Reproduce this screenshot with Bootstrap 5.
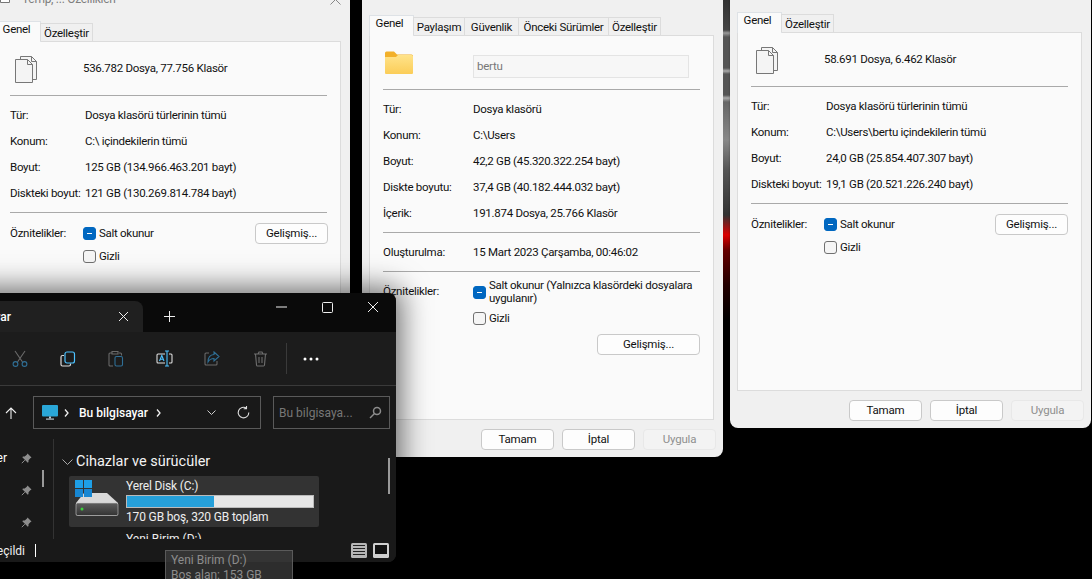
<!doctype html>
<html lang="tr">
<head>
<meta charset="utf-8">
<title>Özellikler</title>
<link href="https://cdn.jsdelivr.net/npm/bootstrap@5.3.0/dist/css/bootstrap.min.css" rel="stylesheet">
<script src="https://cdn.jsdelivr.net/npm/bootstrap@5.3.0/dist/js/bootstrap.bundle.min.js"></script>
<style>
html,body{height:100%}
body{background:#000;font-family:Roboto,"Noto Sans",sans-serif;font-size:11.5px;letter-spacing:-.28px;color:#111;overflow:hidden}
.desk{position:relative;width:1092px;height:579px;overflow:hidden;background:#000}
.strip{position:absolute;left:723px;top:0;width:7px;height:320px;background:linear-gradient(180deg,#333 0,#444 30px,#999 33px,#555 37px,#555 68px,#aaa 71px,#555 74px,#555 95px,#aaa 98px,#666 102px,#888 140px,#555 170px,#333 215px,#d00 235px,#600 250px,#200 285px,#000 320px)}
.dlg{position:absolute;width:361px;background:#f0f0f0;border-radius:0 0 8px 8px;display:flex;flex-direction:column;padding:0 9px 0 7px}
.dlg-a{left:-11px;top:-17px;height:320px}
.dlg-b{left:362px;top:-23px;height:480px}
.dlg-c{left:730px;top:-26px;height:454px;box-shadow:0 1px 2px #0006}
.dlg-title{height:38px;padding:7px 0 0 4px;color:#7e7e7e;font-size:12px;line-height:18px;display:flex;flex:none}
.dlg-title .ttl{margin-left:12px}
.dlg-title .cls{margin:4px 0 0 auto}
.dlg-title .fic{margin-top:-1px}
.dlg-tabs{border:0;flex:none;height:20px;flex-wrap:nowrap;align-items:flex-end;position:relative;z-index:1}
.dlg-tabs .nav-link{padding:0;height:18px;border:1px solid #dcdcdc;border-bottom:0;border-radius:0;margin:0 -1px 0 0;background:#f0f0f0;color:#111;font-size:11.5px;line-height:19px;text-align:center}
.dlg-tabs .nav-link.active{background:#fafafa;color:#111;line-height:15px;margin-bottom:-1px;height:21px;width:45px;padding-right:4px}
.t-ozel{width:53px}.t-pay{width:52px}.t-guv{width:55px}.t-onc{width:91px}
.dlg-panel{flex:1 1 auto;min-height:0;background:#fafafa;border:1px solid #dcdcdc;padding:0 13px}
.dlg-foot{flex:none;height:37px;display:flex;justify-content:flex-end;align-items:flex-start;gap:8px;padding-top:9px;margin-right:-2px}
.w-btn{width:73px;height:21px;padding:0;font-size:11.5px;line-height:19px;background:#fdfdfd;border:1px solid #c9c9c9;border-radius:4px;color:#111;letter-spacing:-.2px}
.w-btn:disabled{background:#f3f3f3;border-color:#e8e8e8;color:#8f8f8f;opacity:1}
.head-row{height:53px;display:flex;align-items:center}
.head-ico{width:73px;flex:none}
.head-ico svg{display:block;margin-left:4px}
.dlg-b .head-ico{width:90px}
.dlg-b .head-ico svg{margin-left:1px}
.head-txt{margin-top:1px}
.name-box{width:216px;height:23px;border:1px solid #e4e4e4;background:#f7f7f7;color:#777;padding:2px 3px;margin-top:8px;line-height:17px}
.rule{border-top:1px solid #a9a9a9;height:0;margin:0}
.sect{padding:7px 0 5px}
.info{height:26px;display:flex;align-items:center;white-space:nowrap}
.info span:first-child{width:75px;flex:none}
.dlg-b .info span:first-child{width:90px}
.attrs{display:flex;padding-top:14px}
.attr-lab{width:73px;flex:none;line-height:13px}
.dlg-b .attrs{padding-top:7px}
.dlg-b .attr-lab{width:90px;padding-top:6px}
.attr-opts{flex:1 1 auto;min-width:0}
.chk{display:flex;align-items:center;gap:3px;line-height:13px}
.chk+.chk{margin-top:10px}
.dlg-b .chk+.chk{margin-top:7px}
.chk b{width:13px;height:13px;flex:none;border-radius:3px;border:1px solid #707070;background:#f5f5f5;display:block;position:relative}
.chk b.on{background:#0067c0;border-color:#0067c0}
.chk b.on::after{content:"";position:absolute;left:3px;right:3px;top:5px;height:1px;background:#fff}
.attr-side{flex:none;margin-top:-4px}
.dlg-a .attr-side{margin-right:-1px}
.adv-b{display:flex;justify-content:flex-end;margin-top:9px}
.w-btn-adv{width:103px}
/* explorer */
.xp{position:absolute;left:-200px;top:293px;width:596px;height:269px;background:#191919;border-radius:8px;box-shadow:0 0 28px 6px rgba(0,0,0,.55);color:#fff;overflow:hidden;display:flex;flex-direction:column;letter-spacing:0}
.xp-title{height:39px;flex:none;background:#0a0a0a;display:flex;align-items:flex-start}
.xp-tab{width:343px;height:31px;margin-top:8px;background:#202020;border-radius:8px 8px 0 0;display:flex;align-items:center;justify-content:flex-end;font-size:12px;font-weight:500}
.xp-tab em{font-style:normal;margin-right:107px}
.xp-tab svg{margin-right:14px}
.xp-plus{width:52px;height:31px;margin-top:8px;display:flex;align-items:center;justify-content:center}
.xp-ctl{margin-left:auto;display:flex}
.xp-ctl span{width:46px;height:28px;display:flex;align-items:center;justify-content:center}
.xp-tools{height:54px;flex:none;background:#1c1c1c;border-bottom:1px solid #3a3a3a;display:flex;align-items:center;padding-left:196px}
.xp-tools span{width:48px;display:flex;justify-content:center}
.xp-tools u{width:1px;height:31px;background:#3a3a3a;display:block;margin:0 0 0 2px}
.xp-tools .more{width:48px;color:#fff}
.xp-addr{height:53px;flex:none;display:flex;align-items:flex-start;padding:10px 0 0 200px}
.xp-up{width:33px;height:33px;display:flex;align-items:center;justify-content:flex-start;padding-left:5px}
.xp-box{height:33px;border:1px solid #5a5a5a;display:flex;align-items:center}
.xp-crumb{width:228px;font-size:12px;font-weight:500;padding-left:8px}
.xp-crumb .cv1{margin:0 10px 0 6px}
.xp-crumb .cv2{margin-left:8px}
.xp-crumb .gr{margin-left:auto;display:flex;gap:21px;padding-right:10px;align-items:center}
.xp-srch{width:117px;margin-left:12px;color:#777;padding:0 7px 0 5px;justify-content:space-between;font-size:12px}
.xp-body{flex:1 1 auto;min-height:0;display:flex;overflow:hidden}
.xp-side{width:254px;flex:none;border-right:1px solid #333;position:relative;padding-top:3px}
.xp-nav{height:32px;display:flex;align-items:center;justify-content:flex-end;font-size:12px;padding-right:21px;gap:14px}
.xp-sbar{position:absolute;left:242px;top:31px;width:2px;height:17px;background:#999}
.xp-main{flex:1 1 auto;position:relative;padding:12px 0 0 8px}
.xp-h{font-size:14.5px;line-height:22px;display:flex;align-items:center;gap:3px;height:22px;color:#f3f3f3}
.xp-drive{width:250px;height:51px;margin:3px 0 0 7px;background:#333;border-radius:2px;display:flex;padding:3px 5px 0 6px}
.xp-dico{width:51px;flex:none;margin-top:1px}
.xp-dtxt{flex:1 1 auto;font-size:12px;line-height:14px;color:#eee;letter-spacing:-.15px}
.xp-meter{height:13px;margin:2px 0 2px;background:#e6e6e6;border:1px solid #bbb}
.xp-meter div{height:100%;background:#26a0da}
.xp-next{margin:5px 0 0 64px;font-size:12px;line-height:14px;color:#eee}
.xp-vbar{position:absolute;right:6px;top:19px;width:2px;height:36px;background:#9a9a9a}
.xp-status{height:23px;flex:none;display:flex;align-items:center;font-size:12px;background:#191919;padding-right:7px;color:#eee}
.xp-count{width:225px;flex:none;text-align:right}
.xp-caret{width:1px;height:13px;background:#fff;margin-left:10px}
.xp-views{margin-left:auto;display:flex;gap:6px}
.xp-tip{position:absolute;left:165px;top:550px;width:128px;height:40px;background:rgba(62,62,62,.72);border:1px solid #5a5a5a;color:#8c8c8c;font-size:12px;line-height:15px;padding:2px 5px;letter-spacing:0}
</style>
</head>
<body>
<div class="desk">
  <div class="strip"></div>

  <section class="dlg dlg-a">
    <div class="dlg-title"><svg class="fic" width="10" height="14" viewBox="0 0 10 14" fill="#fff" stroke="#777"><path d="M.5.500H6.500L9.500 3.500V13.500H.5Z"/></svg><span class="ttl">Temp, ... Özellikleri</span><svg class="cls" width="11" height="11" viewBox="0 0 11 11" stroke="#888"><path d="M.5.500 10.500 10.500M10.500.500 .5 10.500"/></svg></div>
    <ul class="nav nav-tabs dlg-tabs"><li class="nav-item"><a class="nav-link active">Genel</a></li><li class="nav-item"><a class="nav-link t-ozel">Özelleştir</a></li></ul>
    <div class="dlg-panel">
      <div class="head-row">
        <div class="head-ico"><svg width="24" height="28" viewBox="0 0 24 28" fill="#f4f4f4" stroke="#777"><path d="M6.500 4.500V1.500H17.500L22.500 6.500V24.500H18.500"/><path d="M1.500 4.500H13.500L18.500 9.500V27.500H1.500Z"/><path d="M13.500 4.500V9.500H18.500M17.500 1.500V6.500H22.500" fill="none"/></svg></div>
        <div class="head-txt">536.782 Dosya, 77.756 Klasör</div>
      </div>
      <div class="rule"></div>
      <div class="sect">
        <div class="info"><span>Tür:</span><span>Dosya klasörü türlerinin tümü</span></div>
        <div class="info"><span>Konum:</span><span>C:\ içindekilerin tümü</span></div>
        <div class="info"><span>Boyut:</span><span>125 GB (134.966.463.201 bayt)</span></div>
        <div class="info"><span>Diskteki boyut:</span><span>121 GB (130.269.814.784 bayt)</span></div>
      </div>
      <div class="rule"></div>
      <div class="attrs">
        <div class="attr-lab">Öznitelikler:</div>
        <div class="attr-opts">
          <div class="chk"><b class="on"></b><span>Salt okunur</span></div>
          <div class="chk"><b></b><span>Gizli</span></div>
        </div>
        <div class="attr-side"><button class="btn w-btn" type="button">Gelişmiş...</button></div>
      </div>
    </div>
  </section>

  <section class="dlg dlg-b">
    <div class="dlg-title"></div>
    <ul class="nav nav-tabs dlg-tabs"><li class="nav-item"><a class="nav-link active">Genel</a></li><li class="nav-item"><a class="nav-link t-pay">Paylaşım</a></li><li class="nav-item"><a class="nav-link t-guv">Güvenlik</a></li><li class="nav-item"><a class="nav-link t-onc">Önceki Sürümler</a></li><li class="nav-item"><a class="nav-link t-ozel">Özelleştir</a></li></ul>
    <div class="dlg-panel">
      <div class="head-row">
        <div class="head-ico"><svg width="30" height="25" viewBox="0 0 30 25"><path d="M1 3q0-1.500 1.500-1.500H10L13 4.500H27.500Q29 4.500 29 6V10H1Z" fill="#f2b02a"/><path d="M1 23V7H12L14 5H27.500Q29 5 29 6.500V23Q29 24 28 24H2Q1 24 1 23Z" fill="url(#fg)"/><defs><linearGradient id="fg" x1="0" y1="0" x2="0" y2="1"><stop offset="0" stop-color="#ffe38a"/><stop offset="1" stop-color="#fbcd58"/></linearGradient></defs></svg></div>
        <div class="name-box">bertu</div>
      </div>
      <div class="rule"></div>
      <div class="sect">
        <div class="info"><span>Tür:</span><span>Dosya klasörü</span></div>
        <div class="info"><span>Konum:</span><span>C:\Users</span></div>
        <div class="info"><span>Boyut:</span><span>42,2 GB (45.320.322.254 bayt)</span></div>
        <div class="info"><span>Diskte boyutu:</span><span>37,4 GB (40.182.444.032 bayt)</span></div>
        <div class="info"><span>İçerik:</span><span>191.874 Dosya, 25.766 Klasör</span></div>
      </div>
      <div class="rule"></div>
      <div class="sect"><div class="info"><span>Oluşturulma:</span><span>15 Mart 2023 Çarşamba, 00:46:02</span></div></div>
      <div class="rule"></div>
      <div class="attrs">
        <div class="attr-lab">Öznitelikler:</div>
        <div class="attr-opts">
          <div class="chk"><b class="on"></b><span>Salt okunur (Yalnızca klasördeki dosyalara uygulanır)</span></div>
          <div class="chk"><b></b><span>Gizli</span></div>
        </div>
      </div>
      <div class="adv-b"><button class="btn w-btn w-btn-adv" type="button">Gelişmiş...</button></div>
    </div>
    <div class="dlg-foot"><button class="btn w-btn" type="button">Tamam</button><button class="btn w-btn" type="button">İptal</button><button class="btn w-btn" type="button" disabled>Uygula</button></div>
  </section>

  <section class="dlg dlg-c">
    <div class="dlg-title"></div>
    <ul class="nav nav-tabs dlg-tabs"><li class="nav-item"><a class="nav-link active">Genel</a></li><li class="nav-item"><a class="nav-link t-ozel">Özelleştir</a></li></ul>
    <div class="dlg-panel">
      <div class="head-row">
        <div class="head-ico"><svg width="24" height="28" viewBox="0 0 24 28" fill="#f4f4f4" stroke="#777"><path d="M6.500 4.500V1.500H17.500L22.500 6.500V24.500H18.500"/><path d="M1.500 4.500H13.500L18.500 9.500V27.500H1.500Z"/><path d="M13.500 4.500V9.500H18.500M17.500 1.500V6.500H22.500" fill="none"/></svg></div>
        <div class="head-txt">58.691 Dosya, 6.462 Klasör</div>
      </div>
      <div class="rule"></div>
      <div class="sect">
        <div class="info"><span>Tür:</span><span>Dosya klasörü türlerinin tümü</span></div>
        <div class="info"><span>Konum:</span><span>C:\Users\bertu içindekilerin tümü</span></div>
        <div class="info"><span>Boyut:</span><span>24,0 GB (25.854.407.307 bayt)</span></div>
        <div class="info"><span>Diskteki boyut:</span><span>19,1 GB (20.521.226.240 bayt)</span></div>
      </div>
      <div class="rule"></div>
      <div class="attrs">
        <div class="attr-lab">Öznitelikler:</div>
        <div class="attr-opts">
          <div class="chk"><b class="on"></b><span>Salt okunur</span></div>
          <div class="chk"><b></b><span>Gizli</span></div>
        </div>
        <div class="attr-side"><button class="btn w-btn" type="button">Gelişmiş...</button></div>
      </div>
    </div>
    <div class="dlg-foot"><button class="btn w-btn" type="button">Tamam</button><button class="btn w-btn" type="button">İptal</button><button class="btn w-btn" type="button" disabled>Uygula</button></div>
  </section>

  <section class="xp">
    <div class="xp-title">
      <div class="xp-tab"><em>Bu bilgisayar</em><svg width="11" height="11" viewBox="0 0 11 11" stroke="#eee"><path d="M1 1 10 10M10 1 1 10"/></svg></div>
      <div class="xp-plus"><svg width="11" height="11" viewBox="0 0 11 11" stroke="#eee"><path d="M5.500 0V11M0 5.500H11"/></svg></div>
      <div class="xp-ctl">
        <span><svg width="11" height="2" viewBox="0 0 11 2" stroke="#eee"><path d="M0 1H11"/></svg></span>
        <span><svg width="11" height="11" viewBox="0 0 11 11" fill="none" stroke="#eee"><rect x=".5" y=".5" width="10" height="10" rx="1"/></svg></span>
        <span><svg width="12" height="12" viewBox="0 0 12 12" stroke="#eee"><path d="M1 1 11 11M11 1 1 11"/></svg></span>
      </div>
    </div>
    <div class="xp-tools">
      <span><svg width="16" height="17" viewBox="0 0 16 17" fill="none" stroke-width="1.100"><path d="M3 1 10.500 12M13 1 5.500 12" stroke="#6a6a6a"/><circle cx="3.500" cy="14" r="2.400" stroke="#2f6f96"/><circle cx="12.500" cy="14" r="2.400" stroke="#2f6f96"/></svg></span>
      <span><svg width="16" height="16" viewBox="0 0 16 16" fill="none" stroke-width="1.200"><path d="M4 4.500H2.500Q1 4.500 1 6V13.500Q1 15 2.500 15H9Q10.500 15 10.500 13.500V12.500" stroke="#ddd"/><rect x="5" y="1" width="9.500" height="11" rx="2" stroke="#4cc2ff"/></svg></span>
      <span><svg width="16" height="17" viewBox="0 0 16 17" fill="none" stroke-width="1.100"><path d="M4 3H2Q1 3 1 4V15Q1 16 2 16H5M11 3H12.500Q13.500 3 13.500 4V5.500M4 1.500H10V4H4Z" stroke="#6a6a6a"/><rect x="7" y="6.500" width="7.500" height="9.500" rx="1.500" stroke="#2f6f96"/></svg></span>
      <span><svg width="17" height="17" viewBox="0 0 17 17" fill="none" stroke-width="1.100"><path d="M9 4H2Q1 4 1 5V12Q1 13 2 13H9M13 4H15Q16 4 16 5V12Q16 13 15 13H13" stroke="#ddd"/><path d="M11 1V16M9 1H13M9 16H13M3.500 11 5.800 5.500 8 11M4.300 9.300H7.300" stroke="#4cc2ff"/></svg></span>
      <span><svg width="16" height="15" viewBox="0 0 16 15" fill="none" stroke-width="1.100"><path d="M5 2H2Q1 2 1 3V13Q1 14 2 14H12Q13 14 13 13V10" stroke="#6a6a6a"/><path d="M10 1 15 5.500 10 10V7.500Q6 7.500 4 11Q4 4 10 3.500Z" stroke="#2f6f96"/></svg></span>
      <span><svg width="15" height="16" viewBox="0 0 15 16" fill="none" stroke="#6f6f6f" stroke-width="1.100"><path d="M1 3H14M5 3 6 1H9L10 3M2.500 3 3.500 14Q3.600 15 4.500 15H10.500Q11.400 15 11.500 14L12.500 3M6 6V12M9 6V12"/></svg></span>
      <u></u>
      <span class="more"><svg width="16" height="4" viewBox="0 0 16 4" fill="#fff"><circle cx="2" cy="2" r="1.500"/><circle cx="8" cy="2" r="1.500"/><circle cx="14" cy="2" r="1.500"/></svg></span>
    </div>
    <div class="xp-addr">
      <div class="xp-up"><svg width="12" height="12" viewBox="0 0 12 12" fill="none" stroke="#eee" stroke-width="1.100"><path d="M6 12V1M1 6 6 1 11 6"/></svg></div>
      <div class="xp-box xp-crumb">
        <svg width="16" height="15" viewBox="0 0 16 15"><rect width="16" height="11.500" rx="1" fill="#2aa7d8"/><rect x="7" y="11.500" width="2" height="2" fill="#b9c6cf"/><rect x="4" y="13.500" width="8" height="1.200" fill="#b9c6cf"/></svg>
        <svg class="cv1" width="5" height="8" viewBox="0 0 5 8" fill="none" stroke="#eee" stroke-width="1.300"><path d="M1 .5 4 4 1 7.500"/></svg><span>Bu bilgisayar</span><svg class="cv2" width="5" height="8" viewBox="0 0 5 8" fill="none" stroke="#eee" stroke-width="1.300"><path d="M1 .5 4 4 1 7.500"/></svg>
        <span class="gr"><svg width="9" height="5" viewBox="0 0 9 5" fill="none" stroke="#ccc"><path d="M.5.500 4.500 4.500 8.500.500"/></svg><svg width="13" height="13" viewBox="0 0 13 13" fill="none" stroke="#ddd" stroke-width="1.100"><path d="M11.800 6.500A5.300 5.300 0 1 1 9.500 2.200M9.500 0V2.800H6.700"/></svg></span>
      </div>
      <div class="xp-box xp-srch"><span>Bu bilgisaya...</span><svg width="13" height="13" viewBox="0 0 13 13" fill="none" stroke="#8c8c8c" stroke-width="1.500"><circle cx="8" cy="5" r="3.500"/><path d="M5.500 7.500 1 12"/></svg></div>
    </div>
    <div class="xp-body">
      <div class="xp-side">
        <div class="xp-sbar"></div>
        <div class="xp-nav"><span>İndirilenler</span><svg width="11" height="11" viewBox="0 0 11 11" fill="#8d8d8d" stroke="#8d8d8d"><path stroke="none" d="M6.500.5 10.500 4.500 9.300 5.200 7.500 7.300 7.500 9 6.800 9.700 1.300 4.200 2 3.500 3.700 3.500 5.800 1.700Z"/><path d="M3.800 7.200.8 10.200"/></svg></div>
        <div class="xp-nav"><svg width="11" height="11" viewBox="0 0 11 11" fill="#8d8d8d" stroke="#8d8d8d"><path stroke="none" d="M6.500.5 10.500 4.500 9.300 5.200 7.500 7.300 7.500 9 6.800 9.700 1.300 4.200 2 3.500 3.700 3.500 5.800 1.700Z"/><path d="M3.800 7.200.8 10.200"/></svg></div>
        <div class="xp-nav"><svg width="11" height="11" viewBox="0 0 11 11" fill="#8d8d8d" stroke="#8d8d8d"><path stroke="none" d="M6.500.5 10.500 4.500 9.300 5.200 7.500 7.300 7.500 9 6.800 9.700 1.300 4.200 2 3.500 3.700 3.500 5.800 1.700Z"/><path d="M3.800 7.200.8 10.200"/></svg></div>
      </div>
      <div class="xp-main">
        <div class="xp-h"><svg width="11" height="6" viewBox="0 0 11 6" fill="none" stroke="#aaa"><path d="M.5.500 5.500 5.500 10.500.500"/></svg><span>Cihazlar ve sürücüler</span></div>
        <div class="xp-drive">
          <div class="xp-dico"><svg width="44" height="36" viewBox="0 0 44 36"><path d="M9 13H32L43 23V34Q43 35.500 41 35.500H3Q1 35.500 1 34V23Z" fill="#d9d9d9"/><rect x="1" y="23" width="42" height="12.500" rx="1.500" fill="url(#dg)" stroke="#c9c9c9" stroke-width=".6"/><circle cx="7" cy="29" r="1.500" fill="#3bd13b"/><g fill="#1e9fe6"><rect width="8" height="8"/><rect x="9" width="8" height="8"/><rect y="9" width="8" height="8" fill="#1787d3"/><rect x="9" y="9" width="8" height="8" fill="#1787d3"/></g><defs><linearGradient id="dg" x1="0" y1="0" x2="0" y2="1"><stop offset="0" stop-color="#5e5e5e"/><stop offset="1" stop-color="#333"/></linearGradient></defs></svg></div>
          <div class="xp-dtxt"><div>Yerel Disk (C:)</div><div class="xp-meter"><div style="width:47%"></div></div><div>170 GB boş, 320 GB toplam</div></div>
        </div>
        <div class="xp-next">Yeni Birim (D:)</div>
        <div class="xp-vbar"></div>
      </div>
    </div>
    <div class="xp-status"><span class="xp-count">1 öğe seçildi</span><span class="xp-caret"></span>
      <span class="xp-views"><svg width="16" height="15" viewBox="0 0 16 15"><rect width="16" height="15" rx="1.500" fill="#b5b5b5"/><path d="M2 2.500H14M2 5.500H14M2 8.500H14M2 11.500H14" stroke="#222"/></svg><svg width="16" height="15" viewBox="0 0 16 15"><rect width="16" height="15" rx="1.500" fill="#cfcfcf"/><rect x="2" y="2" width="12" height="9" fill="#111"/></svg></span>
    </div>
  </section>
  <div class="xp-tip"><div>Yeni Birim (D:)</div><div>Boş alan: 153 GB</div></div>
</div>
</body>
</html>
